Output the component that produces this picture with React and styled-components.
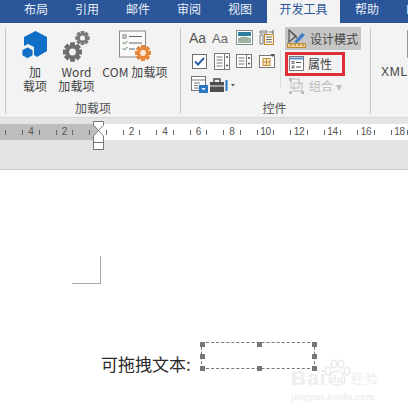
import React from "react";
import styled, { createGlobalStyle } from "styled-components";

const Global = createGlobalStyle`
  html, body { margin: 0; padding: 0; background: #fff; }
  body { font-family: "Noto Sans CJK SC", "Liberation Sans", sans-serif; }
  #root { width: 408px; height: 415px; overflow: hidden; }
`;
const Shell = styled.div`
  width: 408px; height: 415px; display: flex; flex-direction: column; overflow: hidden;
  position: relative; font-family: "Noto Sans CJK SC", "Liberation Sans", sans-serif;
`;
const TabBar = styled.div`
  height: 23px; flex: none; background: #2b579a; display: flex; gap: 3px; padding-left: 12px; overflow: hidden;
`;
const Tab = styled.div`
  flex: none; padding: 0 ${p => (p.$active ? "12.5px" : "12px")}; height: 23px; line-height: 17px; font-size: 12px;
  white-space: nowrap;
  color: ${p => (p.$active ? "#2b579a" : "#e8eef7")};
  background: ${p => (p.$active ? "#f3f3f3" : "transparent")};
`;
const Ribbon = styled.div`
  height: 95px; flex: none; background: #f3f3f3; display: flex; padding: 5px 0 3px 5px; box-sizing: border-box;
  border-bottom: 1px solid #d8d8d8; overflow: hidden; color: #444;
`;
const Group = styled.div`
  flex: none; width: ${p => p.$w}px; display: flex; flex-direction: column; box-sizing: border-box;
  ${p => p.$first ? "border-left: 1px solid #c8c8c8;" : ""}
  ${p => p.$last ? "" : "border-right: 1px solid #c8c8c8;"}
`;
const GroupBody = styled.div`
  flex: 1; display: flex; min-height: 0; padding-left: ${p => p.$pad}px;
`;
const GroupLabel = styled.div`
  height: 17px; line-height: 21px; text-align: center; font-size: 12px; color: #555; padding-right: ${p => p.$shift || 0}px;
`;
const BigButton = styled.div`
  flex: none; width: ${p => p.$w}px; display: flex; flex-direction: column; align-items: center;
`;
const BigIcon = styled.div`
  height: 37px; width: 100%; display: flex; align-items: flex-start; justify-content: center; padding-top: 2px; box-sizing: border-box;
`;
const BigText = styled.div`
  font-size: 12px; line-height: 14px; text-align: center; color: #444; white-space: nowrap;
  letter-spacing: 0.1px;
`;
const XmlButton = styled.div`
  flex: none; width: 40px; display: flex; flex-direction: column; align-items: flex-start;
`;
const XmlGlyph = styled.svg`
  margin: 2px 0 7px 26px; flex: none;
`;
const XmlText = styled.div`
  font: 12px/14px "Liberation Sans", sans-serif; letter-spacing: 0.8px; color: #444; white-space: nowrap;
`;
const SmallGrid = styled.div`
  flex: none; width: 92px; display: grid; grid-template-columns: repeat(4, 22.5px); grid-auto-rows: 23.5px;
  align-items: center; justify-items: center; margin-top: -2px; align-content: start;
`;
const Divider = styled.div`
  flex: none; width: 1px; height: 38px; margin: 22px 4px 0 0; background: #dcdcdc;
`;
const ModeColumn = styled.div`
  flex: none; width: 76px; display: flex; flex-direction: column; margin-top: -1px;
`;
const ModeRow = styled.div`
  height: ${p => p.$h}px; flex: none; display: flex; align-items: center; gap: 4px; box-sizing: border-box; font-size: 12px;
  padding-left: ${p => p.$pl}px; white-space: nowrap; color: ${p => p.$dim ? "#bcbcbc" : "#444"};
  background: ${p => p.$on ? "#c6c6c6" : "transparent"};
  width: ${p => p.$w || 76}px;
  margin-top: ${p => p.$mt || 0}px;
  ${p => p.$flag ? "border: 3px solid #dc2f3a; padding-bottom: 2px;" : ""}
`;
const RulerZone = styled.div`
  height: 52px; flex: none; background: #e4e4e4; padding-top: 7px; box-sizing: border-box; position: relative;
  border-bottom: 1px solid #c9c9c9;
`;
const Ruler = styled.div`
  height: 16px; display: flex; margin-top: -1px;
`;
const MarginPart = styled.div`
  width: 98px; flex: none; background: #bdbdbd; display: flex; justify-content: flex-end; overflow: hidden;
`;
const TextPart = styled.div`
  flex: 1; background: #fff; display: flex; overflow: hidden;
`;
const Cell = styled.div`
  flex: none; width: 33.5px; display: flex; align-items: center; justify-content: center;
  font: 10px/16px "Liberation Sans", sans-serif; color: #555;
`;
const HalfCell = styled.div`
  flex: none; width: 16.75px; display: flex; align-items: center; justify-content: ${p => p.$end ? "flex-start" : "flex-end"};
  padding: 0 8px; box-sizing: border-box;
`;
const Tick = styled.i`
  display: block; flex: none; width: 1px; height: 5px; background: #666;
`;
const Num = styled.span`
  display: block; flex: none; width: 15.5px; text-align: center; letter-spacing: -0.3px;
`;
const IndentMark = styled.svg`
  position: absolute; left: 93px; top: 3px;
`;
const Page = styled.div`
  flex: 1; background: #fff; position: relative; padding-top: 86px;
`;
const CornerMark = styled.div`
  width: 28px; height: 27px; margin-left: 72px; border-right: 1px solid #a8a8a8; border-bottom: 1px solid #a8a8a8;
`;
const FieldLine = styled.div`
  display: flex; align-items: flex-start; margin: 58px 0 0 101px; gap: 11px;
`;
const FieldLabel = styled.div`
  font-size: 17px; line-height: 26px; color: #2a2a2a; white-space: nowrap; width: 89px; margin-top: 9px;
`;
const ControlBox = styled.div`
  width: 112px; height: 25px; position: relative; border: 1px dashed #777; box-sizing: content-box;
`;
const Handle = styled.i`
  position: absolute; width: 5px; height: 5px; background: #777;
  left: ${p => p.$x}px; top: ${p => p.$y}px;
`;
const Watermark = styled.div`
  position: absolute; left: 291px; top: 198px; width: 92px; color: #eeeeee; pointer-events: none;
`;
const WaterHead = styled.div`
  display: flex; align-items: center; font: 700 21px/20px "Liberation Sans", sans-serif; letter-spacing: 1px; white-space: nowrap;
`;
const WaterCn = styled.span`
  font: 13px/20px "Noto Sans CJK SC", sans-serif; margin-left: 0;
`;
const WaterSub = styled.div`
  font: 700 9.5px/12px "Liberation Sans", sans-serif; margin-top: 3px; white-space: nowrap;
`;

const CubeIcon = () => (
  <svg width="28" height="29" viewBox="0 0 28 29">
    <path d="M14.500 1 L26 7 V21 L16 27 L13 25 V17 L7 14 L3 16 V7 Z" fill="#0f6fc6" />
    <path d="M6.500 17 L12 20 V25.500 L6.500 28.500 L1 25.500 V20 Z" fill="#0f6fc6" stroke="#f3f3f3" strokeWidth="0.800" />
  </svg>
);
const Gear = ({ cx, cy, r, fill = "#6f6f6f", hole = "#f3f3f3" }) => {
  const teeth = [0, 45, 90, 135, 180, 225, 270, 315];
  return (
    <g>
      {teeth.map(a => (
        <rect key={a} x={cx - r * 0.24} y={cy - r} width={r * 0.48} height={r * 2} fill={fill} transform={`rotate(${a} ${cx} ${cy})`} />
      ))}
      <circle cx={cx} cy={cy} r={r * 0.76} fill={fill} />
      <circle cx={cx} cy={cy} r={r * 0.36} fill={hole} />
    </g>
  );
};
const GearsIcon = () => (
  <svg width="36" height="33" viewBox="0 0 36 33">
    <Gear cx={13.5} cy={22} r={9.5} />
    <Gear cx={23.5} cy={8} r={7} fill="#7c7c7c" />
  </svg>
);
const ComIcon = () => (
  <svg width="34" height="33" viewBox="0 0 34 33">
    <rect x="1.500" y="1" width="26" height="26" fill="#fbfbfb" stroke="#8a8a8a" />
    <rect x="5" y="5" width="3" height="3" fill="none" stroke="#777" />
    <path d="M11 6.500H24 M11 13H24 M11 19H17" stroke="#666" fill="none" />
    <path d="M4.500 12 l2 2 3-3 M4.500 18 l2 2 3-3" stroke="#4d7a4d" fill="none" />
    <Gear cx={25} cy={23} r={8} fill="#e8873a" hole="#fbeadb" />
  </svg>
);
const AaIcon = ({ thin }) => (
  <svg width="20" height="16" viewBox="0 0 20 16">
    <text x="0" y="13" fontFamily="Liberation Sans, sans-serif" fontSize={thin ? 13 : 14} fill={thin ? "#666" : "#555"}>Aa</text>
  </svg>
);
const PictureIcon = () => (
  <svg width="17" height="15" viewBox="0 0 17 15">
    <rect x="0.500" y="0.500" width="16" height="14" fill="#fff" stroke="#7f8f8f" />
    <rect x="2" y="2" width="13" height="4" fill="#2f7f9f" />
    <path d="M2 8 Q8 5 15 8 V13 H2 Z" fill="#9fb49f" />
  </svg>
);
const BlockIcon = () => (
  <svg width="16" height="17" viewBox="0 0 16 17">
    <path d="M1 2 H8 V4 H1 Z M1 6 H4 V15 H1 Z" fill="none" stroke="#7a7a7a" />
    <rect x="5.500" y="5.500" width="9" height="10" fill="#fdf3df" stroke="#c98a2b" />
    <path d="M7 8H13 M7 10.500H13 M7 13H13" stroke="#777" />
    <path d="M10 3 H15 M13 1 l2 2 -2 2" stroke="#777" fill="none" />
  </svg>
);
const CheckIcon = () => (
  <svg width="15" height="15" viewBox="0 0 15 15">
    <rect x="0.500" y="0.500" width="14" height="14" fill="#fff" stroke="#6d6d6d" />
    <path d="M3 7.500 L6 10.500 L12 4" stroke="#2b5fa8" strokeWidth="2" fill="none" />
  </svg>
);
const ListIcon = ({ h = 17 }) => (
  <svg width="16" height={h} viewBox={`0 0 16 ${h}`}>
    <rect x="0.500" y="0.500" width="15" height={h - 1} fill="#fff" stroke="#777" />
    <path d={`M10.500 1V${h - 1}`} stroke="#777" />
    <path d={`M2.500 4H8.500 M2.500 7H8.500 M2.500 10H8.500 ${h > 14 ? "M2.500 13H8.500" : ""}`} stroke="#777" />
    <path d={`M12 4.500 l1-1.500 1 1.500 Z M12 ${h - 5} l1 1.500 1-1.500 Z`} fill="#444" stroke="#444" strokeWidth="0.500" />
  </svg>
);
const DateIcon = () => (
  <svg width="16" height="14" viewBox="0 0 16 14">
    <rect x="0.500" y="1.500" width="15" height="12" fill="#fff" stroke="#777" />
    <rect x="4" y="4.500" width="7" height="7" fill="#fbe9cf" stroke="#c98a2b" />
    <path d="M7.500 4.500V11.500 M4 8H11" stroke="#c98a2b" />
    <path d="M11.500 0 H16 L13.700 3 Z" fill="#555" />
  </svg>
);
const FormIcon = () => (
  <svg width="17" height="17" viewBox="0 0 17 17">
    <rect x="0.500" y="0.500" width="14" height="14" fill="#fff" stroke="#777" />
    <path d="M0.500 4H14.500 M3 7H9 M3 9.500H7 M3 12H8" stroke="#777" />
    <rect x="8" y="9" width="9" height="8" fill="#2b79c2" />
    <path d="M10.500 12 h4 l-2 2.500 Z" fill="#fff" />
  </svg>
);
const ToolboxIcon = () => (
  <svg width="26" height="16" viewBox="0 0 26 16">
    <path d="M1 5 H15 V15 H1 Z" fill="#4f4f4f" />
    <path d="M5 5 V2 H11 V5" fill="none" stroke="#4f4f4f" strokeWidth="1.500" />
    <path d="M1 9 H15" stroke="#f3f3f3" />
    <path d="M17.500 3 V14" stroke="#2b79c2" strokeWidth="2" />
    <path d="M22 7 h4 l-2 2.500 Z" fill="#555" />
  </svg>
);
const DesignIcon = () => (
  <svg width="19" height="19" viewBox="0 0 19 19">
    <path d="M2 1 L2 13 L9 7 Z M2 1 L10 9" fill="none" stroke="#5a5a5a" strokeWidth="1.300" />
    <path d="M7 13 L15 4 L18 6 L10 14 Z" fill="#3c7fc4" />
    <rect x="0.500" y="14.500" width="18" height="4" fill="#f4d38c" stroke="#b98a3a" />
    <path d="M4 15v2 M8 15v2 M12 15v2 M16 15v2" stroke="#8a6a2a" />
  </svg>
);
const PropsIcon = () => (
  <svg width="15" height="15" viewBox="0 0 15 15">
    <rect x="0.500" y="0.500" width="14" height="14" fill="#fff" stroke="#777" />
    <path d="M0.500 2.500H14.500" stroke="#5b8fc8" strokeWidth="2" />
    <rect x="3" y="5.500" width="2" height="2" fill="none" stroke="#555" strokeWidth="0.800" />
    <rect x="3" y="10" width="2" height="2" fill="none" stroke="#555" strokeWidth="0.800" />
    <path d="M7 6.500H12 M7 11H12" stroke="#555" />
  </svg>
);
const GroupIcon = () => (
  <svg width="17" height="17" viewBox="0 0 17 17">
    <rect x="3" y="2" width="8" height="9" fill="none" stroke="#bbb" />
    <rect x="6" y="6" width="8" height="8" fill="none" stroke="#bbb" />
    <path d="M1 1h3v3H1z M1 14h3v3H1z M13 14h3v3h-3z" fill="#bbb" />
  </svg>
);
const Paw = () => (
  <svg width="28" height="28" viewBox="0 0 28 28" style={{ marginLeft: -4, marginTop: -10, flex: "none" }}>
    <g fill="none" stroke="#ebebeb" strokeWidth="1.500">
      <ellipse cx="5" cy="12" rx="2.800" ry="3.800" />
      <ellipse cx="11" cy="5" rx="2.800" ry="3.800" />
      <ellipse cx="18" cy="5" rx="2.800" ry="3.800" />
      <ellipse cx="24" cy="12" rx="2.800" ry="3.800" />
      <path d="M14 12 C9 12 5 18 6 23 C8 27 20 27 22 23 C23 18 19 12 14 12 Z" />
    </g>
    <text x="14" y="24" textAnchor="middle" fontFamily="Liberation Sans, sans-serif" fontWeight="700" fontSize="10" fill="#ebebeb">du</text>
  </svg>
);

const tabs = ["布局", "引用", "邮件", "审阅", "视图", "开发工具", "帮助", "PDF"];
const leftNums = [6, 4, 2];
const rightNums = [2, 4, 6, 8, 10, 12, 14, 16, 18];
const handles = [
  [-2, -1], [55, -1], [110, -1],
  [-2, 11], [110, 11],
  [-2, 23], [55, 23], [110, 23],
];

const RulerCell = ({ n }) => (
  <Cell><Tick /><Num>{n}</Num><Tick /></Cell>
);

export default function App() {
  return (
    <Shell>
      <Global />
      <TabBar>
        {tabs.map(t => <Tab key={t} $active={t === "开发工具"}>{t}</Tab>)}
      </TabBar>
      <Ribbon>
        <Group $w={176} $first>
          <GroupBody $pad={11}>
            <BigButton $w={36}>
              <BigIcon><CubeIcon /></BigIcon>
              <BigText>加<br />载项</BigText>
            </BigButton>
            <BigButton $w={47}>
              <BigIcon><GearsIcon /></BigIcon>
              <BigText>Word<br />加载项</BigText>
            </BigButton>
            <BigButton $w={70}>
              <BigIcon><ComIcon /></BigIcon>
              <BigText>COM 加载项</BigText>
            </BigButton>
          </GroupBody>
          <GroupLabel>加载项</GroupLabel>
        </Group>
        <Group $w={190}>
          <GroupBody $pad={7}>
            <SmallGrid>
              <AaIcon />
              <AaIcon thin />
              <PictureIcon />
              <BlockIcon />
              <CheckIcon />
              <ListIcon />
              <ListIcon h={14} />
              <DateIcon />
              <FormIcon />
              <ToolboxIcon />
            </SmallGrid>
            <Divider />
            <ModeColumn>
              <ModeRow $h={23} $on $pl={2}><DesignIcon />设计模式</ModeRow>
              <ModeRow $h={24} $mt={2} $flag $w={60} $pl={1}><PropsIcon />属性</ModeRow>
              <ModeRow $h={18} $dim $pl={3}><GroupIcon />组合 ▾</ModeRow>
            </ModeColumn>
          </GroupBody>
          <GroupLabel $shift={2}>控件</GroupLabel>
        </Group>
        <Group $w={40} $last>
          <GroupBody $pad={10}>
            <XmlButton>
              <XmlGlyph width="14" height="28" viewBox="0 0 14 28">
                <rect x="0.500" y="0.500" width="24" height="27" fill="#fbfbfb" stroke="#999" />
              </XmlGlyph>
              <XmlText>XML</XmlText>
            </XmlButton>
          </GroupBody>
        </Group>
      </Ribbon>
      <RulerZone>
        <Ruler>
          <MarginPart>
            {leftNums.map(n => <RulerCell key={n} n={n} />)}
            <HalfCell $end><Tick /></HalfCell>
          </MarginPart>
          <TextPart>
            <HalfCell><Tick /></HalfCell>
            {rightNums.map(n => <RulerCell key={n} n={n} />)}
          </TextPart>
        </Ruler>
        <IndentMark width="12" height="29" viewBox="0 0 12 29">
          <path d="M0.500 0.500 H10.500 V4 L5.500 9.500 L0.500 4 Z" fill="#fff" stroke="#777" />
          <path d="M5.500 9.500 L10.500 15 V21.500 H0.500 V15 Z" fill="#fff" stroke="#777" />
          <rect x="0.500" y="21.500" width="10" height="7" fill="#fff" stroke="#777" />
        </IndentMark>
      </RulerZone>
      <Page>
        <CornerMark />
        <FieldLine>
          <FieldLabel>可拖拽文本:</FieldLabel>
          <ControlBox>
            {handles.map(([x, y]) => <Handle key={`${x}-${y}`} $x={x} $y={y} />)}
          </ControlBox>
        </FieldLine>
        <Watermark>
          <WaterHead>Bai<Paw /><WaterCn>经验</WaterCn></WaterHead>
          <WaterSub>jingyan.baidu.com</WaterSub>
        </Watermark>
      </Page>
    </Shell>
  );
}
